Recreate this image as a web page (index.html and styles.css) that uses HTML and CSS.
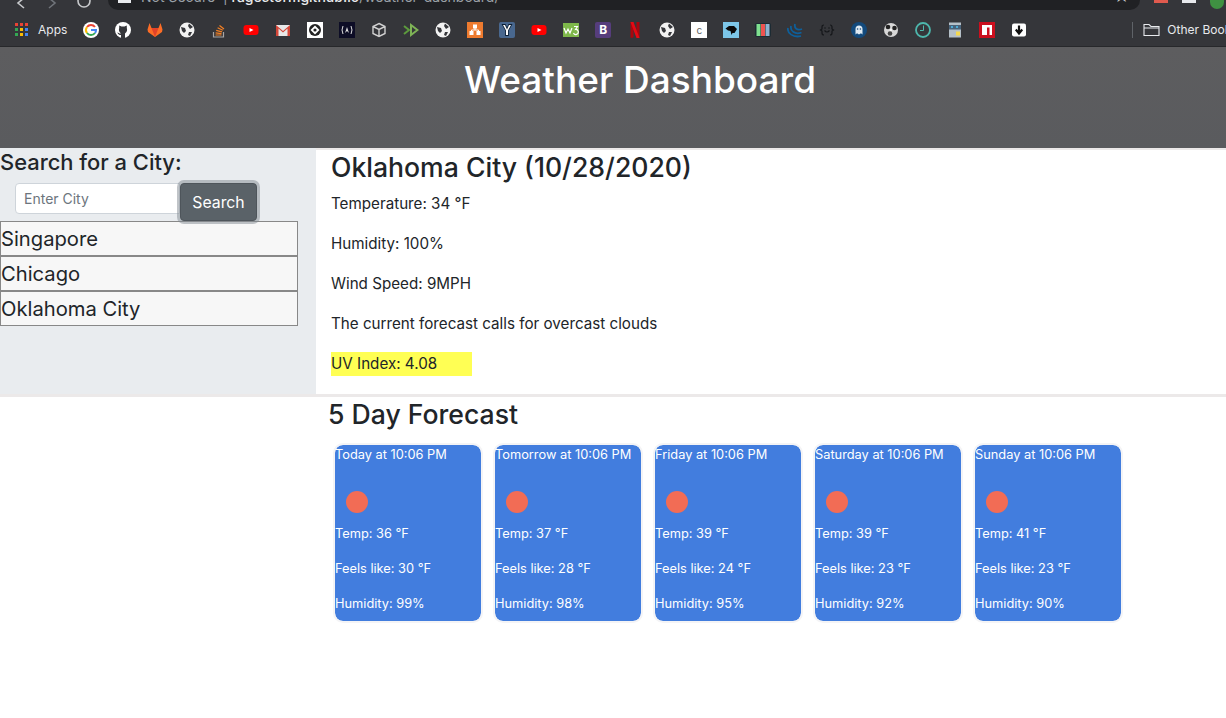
FILE: index.html
```html
<!DOCTYPE html>
<html lang="en">
<head>
  <meta charset="UTF-8">
  <title>Weather Dashboard</title>
  <link rel="stylesheet" href="styles.css">
</head>
<body>
  <div class="chrome">
    <div class="tabstrip">
      <div class="nav-btns">
        <svg class="nav-icon" width="16" height="16" viewBox="0 0 16 16"><path d="M12 -2 L6 3 L12 8" fill="none" stroke="#c8cacc" stroke-width="1.6"/></svg>
        <svg class="nav-icon" width="16" height="16" viewBox="0 0 16 16"><path d="M5 -2 L11 3 L5 8" fill="none" stroke="#70747a" stroke-width="1.6"/></svg>
        <svg class="nav-icon" width="16" height="16" viewBox="0 0 16 16"><circle cx="8" cy="1" r="6" fill="none" stroke="#c8cacc" stroke-width="1.6"/></svg>
      </div>
      <div class="omnibox">
        <span class="url"><span class="url-icon"></span>Not Secure &nbsp;|&nbsp; <b>ragestormgithub.io</b>/weather-dashboard/</span>
        <span class="star">&#9733;</span>
      </div>
      <div class="ext-btns">
        <span class="ext ext-red"></span>
        <span class="ext ext-white"></span>
        <span class="ext ext-green"></span>
      </div>
    </div>
    <div class="bookmarks">
      <svg class="apps" width="14" height="14" viewBox="0 0 14 14">
        <rect x="0" y="0" width="3" height="3" fill="#ea4335"/><rect x="5" y="0" width="3" height="3" fill="#ea4335"/><rect x="10" y="0" width="3" height="3" fill="#ea4335"/>
        <rect x="0" y="5" width="3" height="3" fill="#34a853"/><rect x="5" y="5" width="3" height="3" fill="#fbbc05"/><rect x="10" y="5" width="3" height="3" fill="#4285f4"/>
        <rect x="0" y="10" width="3" height="3" fill="#34a853"/><rect x="5" y="10" width="3" height="3" fill="#fbbc05"/><rect x="10" y="10" width="3" height="3" fill="#4285f4"/>
      </svg>
      <span class="bm-label">Apps</span>
      <div class="bm-icons">
        <svg viewBox="0 0 16 16"><circle cx="8" cy="8" r="8" fill="#fff"/><path d="M12 5 A5 5 0 0 0 4 5" fill="none" stroke="#ea4335" stroke-width="2"/><path d="M4 5 A5 5 0 0 0 4 11" fill="none" stroke="#fbbc05" stroke-width="2"/><path d="M4 11 A5 5 0 0 0 12 11" fill="none" stroke="#34a853" stroke-width="2"/><path d="M8 8 H13 A5 5 0 0 1 12 11" fill="none" stroke="#4285f4" stroke-width="2"/></svg>
        <svg viewBox="0 0 16 16"><circle cx="8" cy="8" r="8" fill="#fff"/><path d="M6 16 V13 C3 13 3 11 2 10.500 C4 10.500 4 12 6 11.500 C4 10 3.500 8 4.200 6 L4.200 3.500 L6.500 4.500 H9.500 L11.800 3.500 V6 C12.500 8 12 10 10 11.500 V16 Z" fill="#35363a"/></svg>
        <svg viewBox="0 0 16 16"><path d="M8 15 L1 10 L0.500 7.500 L2.500 1 L4.500 6 H11.500 L13.500 1 L15.500 7.500 L15 10 Z" fill="#fc6d26"/><path d="M8 15 L4.500 6 H11.500 Z" fill="#e24329"/></svg>
        <svg viewBox="0 0 16 16"><circle cx="8" cy="8" r="7.500" fill="#f2f2f2"/><path d="M2 5 L6 6 L7 9 L5 11 L3 9 Z M10 1.500 L14 5 L11 7 L9 4 Z M10 10 L13 10 L11 14 L9 13 Z" fill="#35363a"/></svg>
        <svg viewBox="0 0 16 16"><path d="M2.500 10 V15 H12.500 V10" fill="none" stroke="#a8a6a5" stroke-width="1.200"/><path d="M4.500 13 H10.500 M4.600 10.800 L10.500 11.700 M5.200 8.400 L11 9.900 M6.600 5.800 L11.800 8.300 M8.500 3.500 L13 7" stroke="#f48024" stroke-width="1.200" fill="none"/></svg>
        <svg viewBox="0 0 16 16"><rect x="0.500" y="3" width="15" height="10" rx="3" fill="#f00"/><path d="M6.500 6 L10.500 8 L6.500 10 Z" fill="#fff"/></svg>
        <svg viewBox="0 0 16 16"><rect x="1" y="3" width="14" height="11" fill="#e8e8e8"/><path d="M1 3 L8 9 L15 3 V14 H12.500 V6.500 L8 10.500 L3.500 6.500 V14 H1 Z" fill="#d44638"/></svg>
        <svg viewBox="0 0 16 16"><rect width="16" height="16" fill="#fff"/><circle cx="8" cy="8" r="6" fill="#222"/><path d="M8 3.500 L12.500 8 L8 12.500 L3.500 8 Z" fill="#fff"/><circle cx="8" cy="8" r="1.600" fill="#222"/></svg>
        <svg viewBox="0 0 16 16"><rect width="16" height="16" fill="#0d0d26"/><path d="M4 4 Q2 8 4 12 M12 4 Q14 8 12 12" stroke="#ddd" fill="none"/><path d="M6 11 L8 5 L10 11 L8 9 Z" fill="#ddd"/></svg>
        <svg viewBox="0 0 16 16"><path d="M8 1.500 L14 4.500 V11.500 L8 14.500 L2 11.500 V4.500 Z M2 4.500 L8 7.500 L14 4.500 M8 7.500 V14.500" fill="none" stroke="#d0d0d0" stroke-width="1.400"/></svg>
        <svg viewBox="0 0 16 16"><path d="M1 4 L6 8 L1 12" fill="none" stroke="#5d9b3d" stroke-width="2"/><path d="M8 3 L14.500 8 L8 13 Z" fill="none" stroke="#7eb356" stroke-width="2"/></svg>
        <svg viewBox="0 0 16 16"><circle cx="8" cy="8" r="7.500" fill="#f2f2f2"/><path d="M2 5 L6 6 L7 9 L5 11 L3 9 Z M10 1.500 L14 5 L11 7 L9 4 Z M10 10 L13 10 L11 14 L9 13 Z" fill="#35363a"/></svg>
        <svg viewBox="0 0 16 16"><rect width="16" height="16" fill="#ee7b2f"/><path d="M6 2.500 H10 V6.500 H6 Z M2.500 9 H6.500 V13 H2.500 Z M9.500 9 H13.500 V13 H9.500 Z" fill="#fff"/><path d="M8 6 V8 H4.500 V10 M8 8 H11.500 V10" stroke="#fff" fill="none"/></svg>
        <svg viewBox="0 0 16 16"><rect width="16" height="16" rx="2" fill="#49688f"/><path d="M2.500 2 H6.500 L8 5.500 L9.500 2 H13.500 L9.800 8.500 V14 H6.200 V8.500 Z" fill="#0c1e33"/><path d="M4 3 H6 L8 7.500 L10 3 H12 L9 8.500 V13 H7 V8.500 Z" fill="#fff"/></svg>
        <svg viewBox="0 0 16 16"><rect x="0.500" y="3" width="15" height="10" rx="3" fill="#f00"/><path d="M6.500 6 L10.500 8 L6.500 10 Z" fill="#fff"/></svg>
        <svg viewBox="0 0 16 16"><rect y="1" width="16" height="14" fill="#7eb84a"/><path d="M1 6 L3 11 L5 7 L7 11 L9 6" fill="none" stroke="#fff" stroke-width="1.200"/><path d="M11 4.500 H14.500 L12.500 7.500 A2.500 2.500 0 1 1 10.500 11" fill="none" stroke="#fff" stroke-width="1.200"/></svg>
        <span class="bm-b">B</span>
        <svg viewBox="0 0 16 16"><path d="M3.500 0 H6.500 V15.500 L3.500 16 Z M9.500 0 H12.500 V16 L9.500 15.500 Z" fill="#a8060e"/><path d="M3.500 0 H6.500 L12.500 16 H9.500 Z" fill="#e50914"/></svg>
        <svg viewBox="0 0 16 16"><circle cx="8" cy="8" r="7.500" fill="#f2f2f2"/><path d="M2 5 L6 6 L7 9 L5 11 L3 9 Z M10 1.500 L14 5 L11 7 L9 4 Z M10 10 L13 10 L11 14 L9 13 Z" fill="#35363a"/></svg>
        <span class="bm-c">c</span>
        <svg viewBox="0 0 16 16"><rect width="16" height="16" fill="#7cc6e8"/><path d="M2.500 6.500 L6 4 H11 L14 7 L11.500 11 H9.500 L8.500 13 L7.500 9 L5 8.500 Z" fill="#0a0a0a"/></svg>
        <svg viewBox="0 0 16 16"><rect y="1" width="16" height="14" rx="2" fill="#1c2b33"/><rect x="1.500" y="2" width="4" height="12" fill="#7fe08f"/><rect x="6" y="2" width="4" height="12" fill="#ef5350"/><rect x="10.500" y="2" width="4" height="12" fill="#8fb3d0"/></svg>
        <svg viewBox="0 0 16 16"><path d="M1 6 C0 11 6 16 14 14 M4 4 C3 9 8 13 14.500 10.500 M8 2 C7 6 10 9 15 7" fill="none" stroke="#0e5f9a" stroke-width="1.800"/></svg>
        <svg viewBox="0 0 16 16"><path d="M5 3 Q3 3 3 5 V7 L1.500 8 L3 9 V11 Q3 13 5 13 M11 3 Q13 3 13 5 V7 L14.500 8 L13 9 V11 Q13 13 11 13" fill="none" stroke="#15171a" stroke-width="1.200"/><path d="M5.500 8.500 Q8 11.500 10.500 8.500" fill="none" stroke="#15171a" stroke-width="1.200"/><circle cx="6" cy="6" r="0.800" fill="#15171a"/><circle cx="10" cy="6" r="0.800" fill="#15171a"/></svg>
        <svg viewBox="0 0 16 16"><circle cx="8" cy="8" r="8" fill="#134a7c"/><path d="M4.500 12.500 V7 A3.500 3.500 0 0 1 11.500 7 V12.500 L10 11.200 L8 12.500 L6 11.200 Z" fill="#dfeaf2"/><circle cx="6.600" cy="7" r="0.800" fill="#134a7c"/><circle cx="9.400" cy="7" r="0.800" fill="#134a7c"/></svg>
        <svg viewBox="0 0 16 16"><circle cx="8" cy="8" r="7" fill="#d8d8d8"/><circle cx="5" cy="5" r="2.300" fill="#222"/><circle cx="11.500" cy="6" r="2.300" fill="#222"/><circle cx="7" cy="11.500" r="2.300" fill="#444"/><circle cx="8" cy="8" r="1" fill="#fff"/></svg>
        <svg viewBox="0 0 16 16"><circle cx="8" cy="8" r="7" fill="none" stroke="#4db6ac" stroke-width="1.800"/><path d="M8.500 3.500 V8.500 H5" fill="none" stroke="#4db6ac"/></svg>
        <svg viewBox="0 0 16 16"><rect x="2" y="0.500" width="12" height="15" fill="#b5c0c8"/><rect x="2" y="3" width="12" height="4.500" fill="#48637a"/><circle cx="5" cy="5" r="1" fill="#4fc3f7"/><circle cx="10" cy="5" r="1" fill="#4fc3f7"/><rect x="9" y="9.500" width="4" height="4" fill="#f5d94e"/></svg>
        <svg viewBox="0 0 16 16"><rect width="16" height="16" fill="#cb0f1e"/><path d="M3 3 H13 V13 H10.500 V5.500 H8 V13 H3 Z" fill="#fff"/></svg>
        <svg viewBox="0 0 16 16"><rect x="1" y="1.500" width="14" height="13" rx="2" fill="#fff"/><path d="M8 3.500 V10 M4.800 7.500 L8 11.500 L11.200 7.500" fill="none" stroke="#111" stroke-width="2.200"/></svg>
      </div>
      <span class="bm-sep"></span>
      <svg class="folder" width="17" height="14" viewBox="0 0 17 14"><path d="M1 12.500 V1.500 H6 L8 3.500 H16 V12.500 Z M1 5 H16" fill="none" stroke="#e8eaed" stroke-width="1.100"/></svg>
      <span class="bm-label other">Other Bookmarks</span>
    </div>
  </div>

  <header class="page-header">
    <h1>Weather Dashboard</h1>
  </header>

  <div class="top-row">
    <aside class="sidebar">
      <h4>Search for a City:</h4>
      <form class="search-form">
        <input type="text" class="city-input" placeholder="Enter City">
        <button type="button" class="search-btn">Search</button>
      </form>
      <ul class="history">
        <li>Singapore</li>
        <li>Chicago</li>
        <li>Oklahoma City</li>
      </ul>
    </aside>
    <section class="current">
      <h3>Oklahoma City (10/28/2020)</h3>
      <p>Temperature: 34 °F</p>
      <p>Humidity: 100%</p>
      <p>Wind Speed: 9MPH</p>
      <p>The current forecast calls for overcast clouds</p>
      <p class="uv">UV Index: 4.08</p>
    </section>
  </div>

  <section class="forecast">
    <h3>5 Day Forecast</h3>
    <div class="cards">
      <div class="card">
        <p class="day">Today at 10:06 PM</p>
        <div class="sun"></div>
        <p>Temp: 36 °F</p>
        <p>Feels like: 30 °F</p>
        <p>Humidity: 99%</p>
      </div>
      <div class="card">
        <p class="day">Tomorrow at 10:06 PM</p>
        <div class="sun"></div>
        <p>Temp: 37 °F</p>
        <p>Feels like: 28 °F</p>
        <p>Humidity: 98%</p>
      </div>
      <div class="card">
        <p class="day">Friday at 10:06 PM</p>
        <div class="sun"></div>
        <p>Temp: 39 °F</p>
        <p>Feels like: 24 °F</p>
        <p>Humidity: 95%</p>
      </div>
      <div class="card">
        <p class="day">Saturday at 10:06 PM</p>
        <div class="sun"></div>
        <p>Temp: 39 °F</p>
        <p>Feels like: 23 °F</p>
        <p>Humidity: 92%</p>
      </div>
      <div class="card">
        <p class="day">Sunday at 10:06 PM</p>
        <div class="sun"></div>
        <p>Temp: 41 °F</p>
        <p>Feels like: 23 °F</p>
        <p>Humidity: 90%</p>
      </div>
    </div>
  </section>
</body>
</html>
```

FILE: styles.css
```css
* {
  margin: 0;
  padding: 0;
  box-sizing: border-box;
}

html, body {
  height: 718px;
  overflow: hidden;
}

body {
  font-family: Inter, "Liberation Sans", sans-serif;
  background-color: white;
  color: #212529;
}

/* browser chrome */
.tabstrip {
  height: 10px;
  background-color: #35363a;
  display: flex;
  overflow: hidden;
}

.nav-btns {
  width: 108px;
  display: flex;
  gap: 16px;
  padding-left: 12px;
}

.nav-icon {
  flex: none;
}

.omnibox {
  width: 1032px;
  height: 10px;
  background-color: #202124;
  border-radius: 0 0 14px 14px;
  display: flex;
  justify-content: space-between;
  overflow: hidden;
  padding: 0 10px 0 10px;
}

.url {
  font-size: 14px;
  line-height: 14px;
  margin-top: -10px;
  color: #9aa0a6;
  white-space: nowrap;
  display: flex;
}

.url b {
  font-weight: 500;
  color: #e8eaed;
}

.url-icon {
  width: 13px;
  height: 13px;
  background-color: #e8eaed;
  margin-right: 10px;
}

.star {
  font-size: 16px;
  line-height: 16px;
  margin-top: -12px;
  color: #c8cacc;
}

.ext-btns {
  display: flex;
  gap: 14px;
  padding-left: 14px;
}

.ext {
  width: 14px;
  height: 3px;
  display: block;
}

.ext-red {
  background-color: #e05a4e;
}

.ext-white {
  background-color: #e8eaed;
}

.ext-green {
  background-color: #3f9142;
  height: 9px;
  border-radius: 0 0 8px 8px;
}

.bookmarks {
  height: 37px;
  background-color: #35363a;
  border-bottom: 1px solid #27282b;
  display: flex;
  align-items: center;
  padding: 3px 0 0 15px;
  white-space: nowrap;
  overflow: hidden;
}

.apps {
  flex: none;
}

.bm-label {
  font-size: 12px;
  color: #e8eaed;
  margin-left: 9px;
}

.bm-icons {
  display: flex;
  gap: 16px;
  margin-left: 16px;
}

.bm-icons svg, .bm-b, .bm-c {
  width: 16px;
  height: 16px;
  flex: none;
  display: block;
}

.bm-b {
  background-color: #563d7c;
  border-radius: 2px;
  color: white;
  font-size: 12px;
  font-weight: 700;
  line-height: 16px;
  text-align: center;
}

.bm-c {
  background-color: white;
  color: #666;
  font-size: 10px;
  line-height: 17px;
  text-align: center;
}

.bm-sep {
  width: 1px;
  height: 16px;
  background-color: #5f6368;
  margin-left: 105px;
  flex: none;
}

.folder {
  flex: none;
  margin-left: 10px;
}

.other {
  margin-left: 7px;
}

/* page */
.page-header {
  height: 101px;
  background: linear-gradient(#5d5d5f, #5a5b5e);
  color: white;
  padding-top: 9px;
}

h1 {
  font-size: 37px;
  font-weight: 500;
  line-height: 48px;
  width: 1280px;
  text-align: center;
}

h3 {
  font-size: 26.6px;
  font-weight: 500;
  line-height: 32px;
}

.top-row {
  display: flex;
  height: 249px;
  border-bottom: 3px solid #ece9e9;
}

.sidebar {
  width: 316px;
  background-color: #e9ecef;
}

.sidebar h4 {
  font-size: 21.9px;
  font-weight: 500;
  line-height: 28px;
}

.search-form {
  display: flex;
  align-items: flex-start;
  padding-left: 15px;
  margin-top: 7px;
}

.city-input {
  width: 165px;
  height: 31px;
  font-family: inherit;
  font-size: 14px;
  padding: 0 8px;
  border: 1px solid #ced4da;
  border-radius: 4px 0 0 4px;
  background-color: white;
}

.city-input::placeholder {
  color: #6c757d;
}

.search-btn {
  width: 77px;
  height: 38px;
  font-family: inherit;
  font-size: 15.8px;
  color: white;
  background-color: #5a6268;
  border: 1px solid #4e555b;
  border-radius: 4px;
  box-shadow: 0 0 0 3px rgba(130, 138, 145, 0.5);
}

.history {
  list-style: none;
  width: 298px;
}

.history li {
  height: 35px;
  font-size: 20.2px;
  line-height: 33px;
  background-color: #f7f7f7;
  border: 1px solid #888;
}

.current {
  flex: 1;
  border-top: 2px solid #ece9e9;
  padding-left: 15px;
}

.current p {
  font-size: 15.2px;
  line-height: 24px;
  margin-bottom: 16px;
}

.current h3 {
  margin-bottom: 9px;
  margin-top: 1px;
}

.current .uv {
  width: 141px;
  background-color: #ffff54;
  margin-bottom: 0;
}

.forecast {
  padding-left: 328px;
}

.forecast h3 {
  margin-top: 1px;
}

.cards {
  display: flex;
  gap: 10px;
  padding: 13px 0 0 5px;
}

.card {
  width: 150px;
  height: 180px;
  background-color: #427dde;
  background-clip: padding-box;
  border: 2px solid #f4f4f6;
  border-radius: 10px;
  color: white;
  font-size: 12.8px;
}

.card p {
  line-height: 20px;
  margin-bottom: 15px;
}

.card .day {
  margin-bottom: 0;
}

.sun {
  width: 22px;
  height: 22px;
  border-radius: 50%;
  background-color: #f26c55;
  margin: 26px 0 11px 11px;
}
```
